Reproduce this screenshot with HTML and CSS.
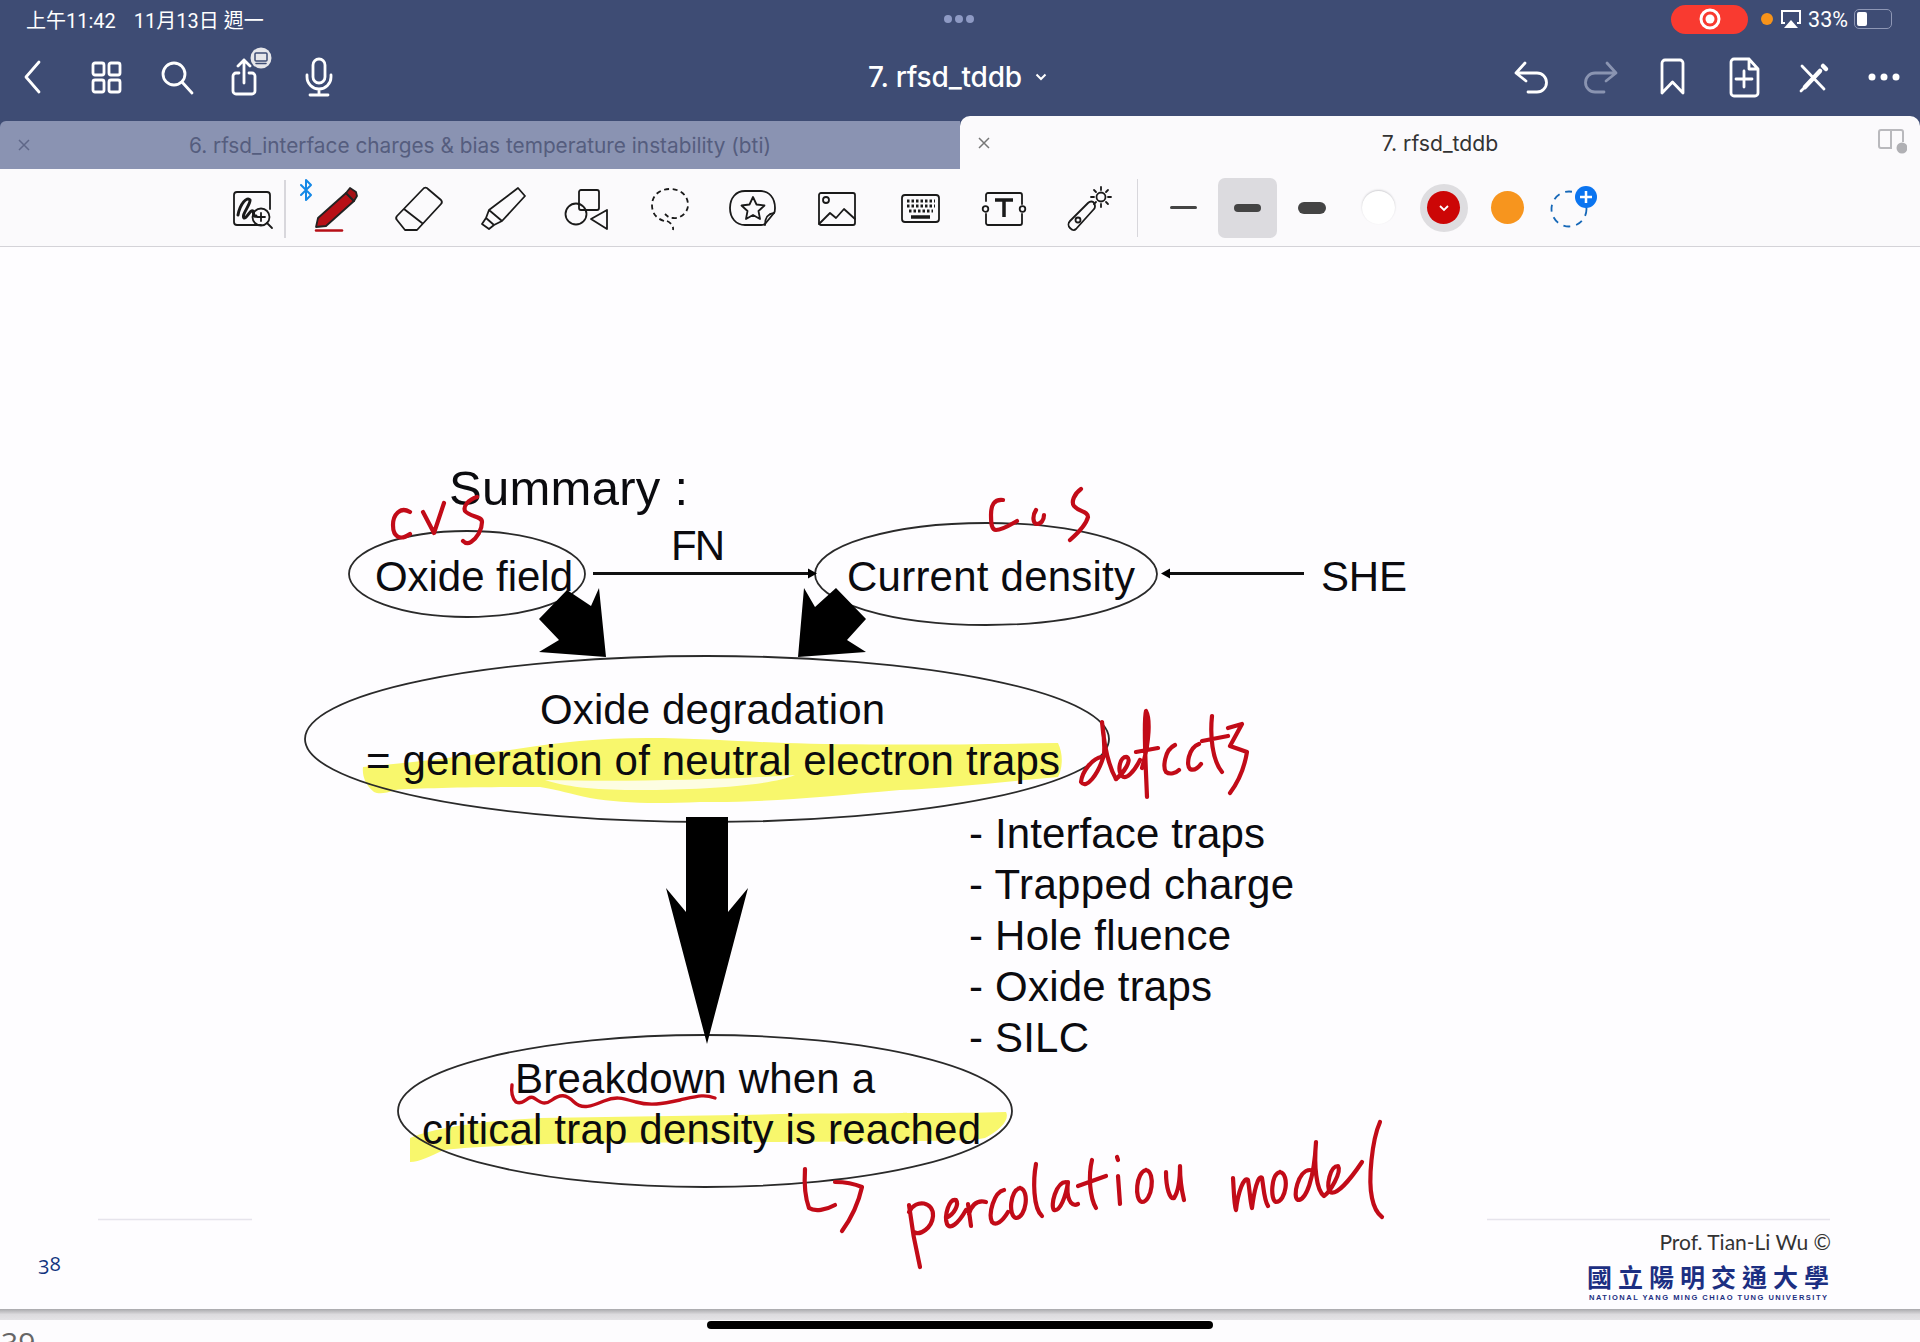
FILE: index.html
```html
<!DOCTYPE html>
<html lang="zh-Hant">
<head>
<meta charset="utf-8">
<title>7. rfsd_tddb</title>
<link rel="stylesheet" href="styles.css">
</head>
<body>
<div class="app">
  <div class="status">
    <div class="status-time"><span>上午11:42</span><span>11月13日 週一</span></div>
    <div class="status-dots"><i></i><i></i><i></i></div>
    <div class="status-right">
      <div class="rec"><svg width="24" height="24" viewBox="0 0 24 24"><circle cx="12" cy="12" r="9" class="rec-ring"/><circle cx="12" cy="12" r="4.5" class="rec-core"/></svg></div>
      <i class="mic-dot"></i>
      <svg class="airplay" width="24" height="20" viewBox="0 0 24 20"><path d="M6 14H3V2h18v12h-3" class="st-w"/><path d="M12 11l7 8H5z" class="fill-w"/></svg>
      <span class="pct">33%</span>
      <div class="battery"><div class="battery-fill"></div></div>
    </div>
  </div>

  <div class="nav">
    <div class="nav-group">
      <div class="nav-slot"><svg class="ico" viewBox="0 0 40 40"><path d="M24 5L11 20l13 15"/></svg></div>
      <div class="nav-slot"><svg class="ico" viewBox="0 0 40 40"><rect x="7" y="6" width="11" height="12" rx="2"/><rect x="23" y="6" width="11" height="12" rx="2"/><rect x="7" y="23" width="11" height="12" rx="2"/><rect x="23" y="23" width="11" height="12" rx="2"/></svg></div>
      <div class="nav-slot"><svg class="ico" viewBox="0 0 40 40"><circle cx="17" cy="17" r="11"/><path d="M25 25l10 11"/></svg></div>
      <div class="nav-slot"><svg class="ico share" viewBox="0 0 40 40"><path d="M12 16H9a3 3 0 0 0-3 3v15a3 3 0 0 0 3 3h16a3 3 0 0 0 3-3V19a3 3 0 0 0-3-3h-3M17 26V3M11 9l6-6 6 6"/><circle cx="34" cy="1" r="10.5" class="badge"/><rect x="28" y="-4" width="12" height="8" rx="1" class="badge-in"/><path d="M29 6.500h10" class="badge-in"/></svg></div>
      <div class="nav-slot"><svg class="ico" viewBox="0 0 40 40"><rect x="14" y="2" width="12" height="24" rx="6"/><path d="M8 18v2a12 12 0 0 0 24 0v-2M20 32v5M11 38h18"/></svg></div>
    </div>
    <div class="doc-title">7. rfsd_tddb<svg class="chev" width="12" height="8" viewBox="0 0 12 8"><path d="M1.500 1.500L6 6l4.500-4.500"/></svg></div>
    <div class="nav-group nav-end">
      <div class="nav-slot"><svg class="ico" viewBox="0 0 40 40"><path d="M14 6L5 16l10 8M5 16h21a8.500 8.500 0 0 1 0 19h-9"/></svg></div>
      <div class="nav-slot"><svg class="ico dim" viewBox="0 0 40 40"><path d="M26 6l9 10-10 8M35 16H14a8.500 8.500 0 0 0 0 19h9"/></svg></div>
      <div class="nav-slot"><svg class="ico" viewBox="0 0 40 40"><path d="M10 36V6a3 3 0 0 1 3-3h15a3 3 0 0 1 3 3v30L20.500 25z"/></svg></div>
      <div class="nav-slot"><svg class="ico" viewBox="0 0 40 40"><path d="M8 5a3 3 0 0 1 3-3h15l9 10v24a3 3 0 0 1-3 3H11a3 3 0 0 1-3-3zM26 2v10h9M21 14v16M13 22h16"/></svg></div>
      <div class="nav-slot"><svg class="ico" viewBox="0 0 40 40"><path d="M9 9l22 23"/><path d="M30 9l3 3" class="thick"/><path d="M27 14L12 30" class="thick"/><path d="M11 31l-3 3"/></svg></div>
      <div class="nav-slot"><svg class="ico solid" viewBox="0 0 40 40"><circle cx="8" cy="20" r="3.500"/><circle cx="20" cy="20" r="3.500"/><circle cx="32" cy="20" r="3.500"/></svg></div>
    </div>
  </div>

  <div class="tabs">
    <div class="tab tab-off">
      <svg class="tab-x" width="14" height="14" viewBox="0 0 14 14"><path d="M2 2l10 10M12 2L2 12"/></svg>
      <span>6. rfsd_interface charges &amp; bias temperature instability (bti)</span>
    </div>
    <div class="tab tab-on">
      <svg class="tab-x" width="14" height="14" viewBox="0 0 14 14"><path d="M2 2l10 10M12 2L2 12"/></svg>
      <span>7. rfsd_tddb</span>
      <svg class="split" width="30" height="26" viewBox="0 0 30 26"><path d="M7 20H4a2 2 0 0 1-2-2V4a2 2 0 0 1 2-2h20a2 2 0 0 1 2 2v10M14 2v18H7"/><circle cx="25" cy="20" r="5.500" class="split-dot"/></svg>
    </div>
  </div>

  <div class="toolbar">
    <div class="tool tool-first">
      <svg class="t-ico" viewBox="0 0 48 48"><path d="M33 40H9a3 3 0 0 1-3-3V10a3 3 0 0 1 3-3h30a3 3 0 0 1 3 3v14"/><path d="M10 30c2-11 9-19 12-15 1 4-9 15-6 18 3 1 6-9 9-7 1 2 0 6 3 5" class="bold"/><circle cx="33" cy="32" r="8.500"/><path d="M39 38l5 5M33 28v8M29 32h8"/></svg>
      <i class="tool-rule"></i>
    </div>
    <div class="tool">
      <svg class="t-ico" viewBox="0 0 48 48"><path d="M-10 0L0 10-5 15V-5L0 0-10 10" class="bt"/><path d="M5 42L7 33 35 8l8 8-28 25z" class="pen-body"/><path d="M35 8l4-5 6 4 1 4-3 5z" class="pen-cap"/><path d="M5 45.500h26" class="pen-line"/></svg>
    </div>
    <div class="tool">
      <svg class="t-ico" viewBox="0 0 48 48"><path d="M28 4a3 3 0 0 1 5 0l13 11a3 3 0 0 1 0 4L22 45H10L2 35a3 3 0 0 1 0-4zM9 24l18 14"/></svg>
    </div>
    <div class="tool">
      <svg class="t-ico" viewBox="0 0 48 48"><path d="M39 3l7 8-23 25-13-11zM10 25l-3 8 8 7 8-4M7 33l-4 6 7 5 5-4"/></svg>
    </div>
    <div class="tool">
      <svg class="t-ico" viewBox="0 0 48 48"><rect x="17" y="5" width="20" height="20" rx="2"/><circle cx="14" cy="29" r="10.500"/><path d="M45 25L29 34l16 10z"/></svg>
    </div>
    <div class="tool">
      <svg class="t-ico dash" viewBox="0 0 48 48"><path d="M18 36C9 33 6 27 6 20 6 10 14 4 24 4s18 6 18 16c0 8-8 14-15 13-4 0-6-2-8-4M21 36c3 1 7 5 6 9"/></svg>
    </div>
    <div class="tool">
      <svg class="t-ico" viewBox="0 0 48 48"><path d="M16 6h16c8 0 14 7 14 17 0 2 0 4-1 5l-9 11c-1 1-3 1-4 1H16C7 40 1 33 1 23S7 6 16 6z"/><path d="M24 12l3.500 7.500 8 1-6 5.500 1.500 8-7-4-7 4 1.500-8-6-5.500 8-1zM36 40c0-7 2-11 9-12"/></svg>
    </div>
    <div class="tool">
      <svg class="t-ico" viewBox="0 0 48 48"><rect x="6" y="8" width="36" height="32" rx="2"/><circle cx="13" cy="15" r="3"/><path d="M6 39l11-11 6 5 8-9 11 10"/></svg>
    </div>
    <div class="tool">
      <svg class="t-ico" viewBox="0 0 48 48"><rect x="5" y="10" width="37" height="27" rx="3"/><path d="M10 16h28M10 21h28M12 26h24" class="keys"/><path d="M14 32h19" class="thick"/></svg>
    </div>
    <div class="tool">
      <svg class="t-ico" viewBox="0 0 48 48"><path d="M6 16V10a2 2 0 0 1 2-2h32a2 2 0 0 1 2 2v9M42 29v9a2 2 0 0 1-2 2H8a2 2 0 0 1-2-2v-9"/><circle cx="5.500" cy="24" r="2.800"/><circle cx="42.500" cy="24" r="2.800"/><path d="M15 15h18M24 15v17" class="thick"/></svg>
    </div>
    <div class="tool">
      <svg class="t-ico" viewBox="0 0 48 48"><path d="M6 36L24 18c2-2 5-2 6 0s2 4 0 6L12 44c-2 2-4 1-6-1s-2-5 0-7z"/><circle cx="14" cy="35" r="2.500"/><circle cx="37" cy="12" r="4.500"/><path d="M37 2v3M37 19v3M47 12h-3M30 12h-3M44 5l-2 2M32 17l-2 2M44 19l-2-2M32 7l-2-2"/></svg>
    </div>
    <i class="tool-sep"></i>
    <div class="swatch"><i class="line line-s"></i></div>
    <div class="swatch swatch-on"><i class="line line-m"></i></div>
    <div class="swatch"><i class="line line-l"></i></div>
    <div class="swatch"><i class="dot dot-white"></i></div>
    <div class="swatch"><i class="halo"><i class="dot dot-red"><svg width="12" height="8" viewBox="0 0 12 8"><path d="M2 2l4 4 4-4"/></svg></i></i></div>
    <div class="swatch"><i class="dot dot-orange"></i></div>
    <div class="swatch">
      <svg class="add-color" width="52" height="52" viewBox="0 0 52 52"><circle cx="20" cy="28" r="17.500"/><circle cx="37" cy="16" r="11" class="add-bg"/><path d="M37 10v12M31 16h12" class="add-plus"/></svg>
    </div>
  </div>

  <div class="slide">
    <svg class="slide-art" width="1920" height="1062" viewBox="0 247 1920 1062">
      <g class="hl">
        <path d="M363 767C420 762 470 755 510 750C560 742 600 738 647 738C700 738 750 742 785 743C850 745 950 745 1058 743C1064 755 1062 770 1058 777C1000 782 950 788 900 790C820 797 760 803 700 802C650 804 620 803 590 798C570 794 560 790 540 787C480 787 420 788 395 790C385 794 378 794 374 792C365 785 362 775 363 767Z"/>
        <path d="M545 780C620 782 720 780 795 775C770 786 700 790 640 790C600 790 570 788 545 780Z" class="hl-gap"/>
        <path d="M410 1138C440 1125 504 1120 540 1118L738 1115C850 1112 950 1114 1006 1112C1010 1120 1000 1130 985 1138L973 1140C900 1142 700 1142 571 1143C520 1145 470 1147 444 1150C430 1156 420 1162 410 1162Z"/>
      </g>
      <g class="shape">
        <ellipse cx="467" cy="574" rx="118" ry="43"/>
        <ellipse cx="986" cy="574" rx="171" ry="51"/>
        <ellipse cx="707" cy="739" rx="402" ry="83"/>
        <ellipse cx="705" cy="1111" rx="307" ry="76"/>
        <path d="M593 573.500H810M1304 573.500H1168" class="arrow-line"/>
      </g>
      <g class="arrow">
        <path d="M817 573.500l-9-5v10zM1161 573.500l9-5v10z"/>
        <path d="M606 657L599 588 591 606 567 590 539 619 559 640 539 652z"/>
        <path d="M798 657L804 588 815 607 836 588 866 619 847 640 866 652z"/>
        <path d="M686 817H728V912L748 888 707 1044 666 888 686 912z"/>
      </g>
      <g class="label">
        <text x="449" y="505" class="big" textLength="239">Summary :</text>
        <text x="375" y="591" textLength="198">Oxide field</text>
        <text x="671" y="560" textLength="54">FN</text>
        <text x="847" y="591" textLength="288">Current density</text>
        <text x="1321" y="591" textLength="86">SHE</text>
        <text x="540" y="724" textLength="345">Oxide degradation</text>
        <text x="366" y="775" textLength="694">= generation of neutral electron traps</text>
        <text x="969" y="848" textLength="296">- Interface traps</text>
        <text x="969" y="899" textLength="325">- Trapped charge</text>
        <text x="969" y="950" textLength="262">- Hole fluence</text>
        <text x="969" y="1001" textLength="243">- Oxide traps</text>
        <text x="969" y="1052" textLength="120">- SILC</text>
        <text x="515" y="1093" textLength="360">Breakdown when a</text>
        <text x="422" y="1144" textLength="559">critical trap density is reached</text>
      </g>
      <g class="ink">
        <path d="M410 512C400 506 393 515 393 525C393 537 400 541 410 534M423 512L434 533L444 503M477 497C468 500 463 506 465 511C470 517 482 516 482 522C482 530 477 538 471 542C468 544 465 543 463 541"/>
        <path d="M1003 500C994 499 991 505 991 515C991 525 992 530 996 530C1002 530 1010 525 1017 521M1036 510C1032 516 1033 524 1037 524C1041 524 1044 520 1044 515M1081 489C1074 494 1071 502 1074 506C1079 512 1088 511 1088 517C1086 525 1078 533 1070 540"/>
        <path d="M1102 757C1092 758 1082 772 1081 782C1086 790 1098 775 1104 755C1105 742 1103 728 1102 722C1104 745 1108 765 1116 779"/>
        <path d="M1116 779C1124 773 1132 760 1127 757C1120 756 1117 770 1122 776C1126 780 1134 772 1140 760"/>
        <path d="M1142 768C1150 740 1150 718 1146 711C1143 722 1146 770 1147 797M1136 752L1158 748"/>
        <path d="M1175 745C1164 750 1163 768 1166 772C1170 775 1176 773 1179 770M1199 744C1188 748 1186 766 1190 769C1194 771 1198 768 1201 764"/>
        <path d="M1212 716C1210 735 1212 760 1222 772M1202 741L1228 736M1228 728L1242 724L1230 746L1247 752C1244 770 1236 785 1230 793"/>
        <path d="M512 1085C511 1092 512 1098 516 1102C524 1106 528 1094 534 1098S544 1106 552 1100S566 1094 574 1102S592 1106 604 1101S622 1098 636 1102S662 1104 680 1100S704 1094 715 1098" class="fine"/>
        <path d="M805 1169C804 1185 806 1200 809 1208C815 1212 826 1210 835 1205M835 1182C845 1182 855 1184 862 1187C858 1205 850 1220 842 1231"/>
        <path d="M909 1205C912 1230 916 1250 920 1267M909 1212C916 1198 934 1202 933 1216C932 1228 920 1236 914 1232"/>
        <path d="M946 1218C955 1214 959 1204 956 1200C949 1198 944 1216 947 1224C950 1230 958 1224 966 1210M968 1204L971 1226M969 1214C972 1204 978 1200 986 1202"/>
        <path d="M1004 1190C994 1192 988 1214 992 1222C996 1226 1002 1222 1008 1212M1020 1188C1010 1190 1008 1216 1016 1218C1026 1218 1030 1190 1020 1188"/>
        <path d="M1036 1164C1033 1180 1033 1208 1042 1216M1066 1182C1056 1182 1050 1206 1054 1210C1060 1212 1066 1196 1068 1182C1066 1196 1070 1208 1078 1204"/>
        <path d="M1092 1160C1088 1176 1090 1198 1096 1208M1078 1186L1106 1176M1118 1176L1120 1204M1117 1157L1118 1160"/>
        <path d="M1146 1170C1136 1172 1134 1200 1142 1202C1152 1202 1156 1172 1146 1170M1166 1172C1166 1188 1170 1200 1174 1198C1178 1192 1180 1184 1180 1166C1180 1184 1182 1192 1184 1200"/>
        <path d="M1233 1178C1234 1192 1234 1205 1236 1210C1238 1192 1244 1176 1248 1180C1250 1192 1250 1200 1252 1208C1254 1192 1258 1174 1262 1178C1264 1190 1264 1200 1268 1206M1280 1172C1271 1174 1270 1200 1276 1202C1286 1202 1290 1174 1280 1172"/>
        <path d="M1310 1170C1298 1170 1292 1198 1298 1200C1306 1200 1314 1180 1316 1142C1314 1165 1316 1190 1324 1196C1330 1192 1342 1172 1338 1166C1330 1166 1326 1186 1330 1192C1336 1196 1350 1180 1362 1162M1380 1122C1372 1140 1368 1180 1372 1198C1374 1208 1378 1214 1382 1217"/>
      </g>
      <path d="M98 1219.500H252M1487 1219.500H1830" class="foot-rule"/>
      <text x="38" y="1271" class="page-no"><tspan dy="3">3</tspan><tspan dy="-3">8</tspan></text>
      <text x="1831" y="1250" class="prof">Prof. Tian-Li Wu ©</text>
      <text x="1587" y="1287" class="uni" textLength="242">國立陽明交通大學</text>
      <text x="1589" y="1300" class="uni-en" textLength="238">NATIONAL YANG MING CHIAO TUNG UNIVERSITY</text>
    </svg>
  </div>
  <div class="slide-shadow"></div>
  <div class="next-page"><span>39</span><i class="home"></i></div>
</div>
</body>
</html>
```
FILE: styles.css
```css
* { box-sizing: border-box; }
html, body { margin: 0; padding: 0; background: #fdfcfe; }
i { display: block; }
.app { width: 1920px; height: 1342px; display: flex; flex-direction: column; overflow: hidden; position: relative; font-family: Inter, "Noto Sans CJK TC", sans-serif; }

.status { height: 40px; background: #3e4c74; color: #fff; display: grid; grid-template-columns: 1fr auto 1fr; align-items: center; font-size: 19px; padding: 0 28px 2px 26px; }
.status-time { display: flex; gap: 18px; font-family: Roboto, "Noto Sans CJK TC", sans-serif; font-size: 20px; }
.status-dots { display: flex; gap: 3px; }
.status-dots i { width: 8px; height: 8px; border-radius: 50%; background: #8e9ac4; }
.status-right { display: flex; align-items: center; justify-content: flex-end; }
.rec { width: 77px; height: 29px; border-radius: 15px; background: #f93a30; display: flex; align-items: center; justify-content: center; margin-right: 2px; }
.rec-ring { fill: #f93a30; stroke: #fff; stroke-width: 3; }
.rec-core { fill: #fff; }
.mic-dot { width: 12px; height: 12px; border-radius: 50%; background: #f7931a; margin-left: 11px; }
.airplay { margin-left: 6px; margin-right: -2px; }
.st-w { fill: none; stroke: #fff; stroke-width: 2; }
.fill-w { fill: #fff; }
.pct { margin-left: 7px; font-size: 21.500px; font-family: Roboto, sans-serif; }
.battery { width: 38px; height: 20px; margin-left: 6px; border: 1.500px solid #8e97b5; border-radius: 5px; padding: 2px; }
.battery-fill { width: 10px; height: 100%; background: #fff; border-radius: 2px; }

.nav { height: 76px; background: #3e4c74; display: grid; grid-template-columns: 1fr auto 1fr; align-items: center; padding-bottom: 2px; }
.nav-group { display: flex; margin-left: -1px; }
.nav-end { justify-content: flex-end; margin: 0 1px 0 0; }
.nav-slot { width: 71px; display: flex; justify-content: center; }
.nav-end .nav-slot { width: 70.600px; }
.ico { width: 40px; height: 40px; overflow: visible; fill: none; stroke: #fff; stroke-width: 2.800; stroke-linecap: round; stroke-linejoin: round; }
.ico.dim { stroke: #8a94b1; }
.ico.solid { fill: #fff; stroke: none; }
.ico .thick { stroke-width: 4.500; }
.ico .badge { fill: #e6e6ea; stroke: none; }
.ico .badge-in { stroke: #3e4c74; stroke-width: 1.500; }
.share { transform: translateX(-1px); }
.doc-title { color: #fff; font-size: 28px; font-weight: 500; display: flex; align-items: center; gap: 13px; letter-spacing: -0.200px; margin-right: 5px; }
.chev { fill: none; stroke: #fff; stroke-width: 2; }

.tabs { height: 53px; display: flex; align-items: flex-end; background: #3e4c74; }
.tab { width: 960px; position: relative; display: flex; align-items: center; justify-content: center; }
.tab-off { height: 48px; background: #8a93b2; color: #555d7e; border-radius: 6px 0 0 0; font-size: 20.800px; }
.tab-on { height: 53px; background: #fbfafc; color: #333; border-radius: 10px 10px 0 0; font-size: 21.200px; }
.tab-x { position: absolute; left: 17px; top: 50%; margin-top: -7px; fill: none; stroke: #5f6788; stroke-width: 1.500; }
.tab-on .tab-x { stroke: #777; }
.split { position: absolute; right: 13px; top: 12px; fill: none; stroke: #b9b9bd; stroke-width: 2; }
.split-dot { fill: #b0b0b4; stroke: none; }

.toolbar { height: 78px; background: #fbfafc; border-bottom: 1.500px solid #d4d3d8; display: flex; align-items: center; padding: 0 0 0 210px; }
.tool { width: 83.600px; height: 60px; display: flex; align-items: center; justify-content: center; position: relative; }
.tool-rule { position: absolute; right: 8px; top: 2px; width: 1.500px; height: 58px; background: #d8d7dc; }
.t-ico { width: 48px; height: 48px; overflow: visible; fill: none; stroke: #1a1a1a; stroke-width: 1.800; stroke-linecap: round; stroke-linejoin: round; margin-top: 2px; }
.t-ico.dash { stroke-dasharray: 5 3.500; stroke-linecap: butt; }
.t-ico .bold { stroke-width: 3; }
.t-ico .thick { stroke-width: 3.500; stroke-linecap: butt; }
.t-ico .keys { stroke-width: 3; stroke-dasharray: 2.500 2; stroke-linecap: butt; }
.t-ico .bt { stroke: #1488e6; stroke-width: 2; }
.pen-body { fill: #b70f16; stroke: #222; }
.pen-cap { fill: #a41015; stroke: #222; }
.pen-line { stroke: #b70f16; stroke-width: 2.500; }
.tool-sep { width: 1.500px; height: 58px; background: #d8d7dc; margin: 0 13px 0 7px; }
.swatch { width: 65px; height: 60px; display: flex; align-items: center; justify-content: center; }
.swatch-on { width: 59px; margin: 0 4px 0 2px; background: #dcdbdf; border-radius: 7px; }
.line { background: #444; border-radius: 6px; }
.line-s { width: 27px; height: 3px; }
.line-m { width: 27px; height: 8px; }
.line-l { width: 28px; height: 12px; margin-left: -4px; }
.dot { width: 33px; height: 33px; border-radius: 50%; display: flex; align-items: center; justify-content: center; }
.dot-white { background: #fff; box-shadow: 0 -1px 2px #cfcfd2; }
.dot-red { background: #cc0606; }
.dot-red svg { fill: none; stroke: #fff; stroke-width: 1.800; }
.dot-orange { background: #f7951e; margin-left: -2px; }
.halo { width: 48px; height: 48px; border-radius: 50%; background: #dedde0; display: flex; align-items: center; justify-content: center; }
.add-color { fill: none; stroke: #1668b8; stroke-width: 1.800; stroke-dasharray: 7 6; overflow: visible; transform: translate(1px, -1px); }
.add-bg { fill: #0a74f0; stroke: none; }
.add-plus { stroke: #fff; stroke-width: 2.500; stroke-dasharray: none; }

.slide { height: 1062px; background: #fefdff; }
.slide-art { display: block; }
.hl path { fill: #f8f76c; stroke: none; }
.hl .hl-gap { fill: #fdfde2; }
.shape { fill: none; stroke: #2a2a2a; stroke-width: 1.800; }
.arrow-line { stroke-width: 3px; stroke: #111; }
.arrow { fill: #000; }
.label text { font-family: "Liberation Sans", Arial, sans-serif; font-size: 42px; fill: #0b0b0f; }
.label .big { font-size: 49px; }
.ink path { fill: none; stroke: #c20b18; stroke-width: 4.200; stroke-linecap: round; stroke-linejoin: round; }
.ink .fine { stroke-width: 3.400px; }
.foot-rule { stroke: #e6e4ec; stroke-width: 1.500; fill: none; }
.page-no { font-family: "Open Sans", sans-serif; font-size: 20px; fill: #12347e; }
.prof { font-family: Lato, sans-serif; font-size: 21px; fill: #333; text-anchor: end; }
.uni { font-family: "Noto Sans CJK TC", sans-serif; font-size: 25px; font-weight: 700; fill: #1c2f82; }
.uni-en { font-family: "Liberation Sans", sans-serif; font-size: 7.500px; font-weight: 700; fill: #1c2f82; }

.slide-shadow { height: 11px; background: linear-gradient(#a9a9ac, #dcdbde 50%, #e4e3e6); }
.next-page { flex: 1; background: #fdfcfe; position: relative; overflow: hidden; }
.next-page span { position: absolute; left: 1px; top: 8px; font: 30px/30px "Open Sans", sans-serif; color: #666; }
.home { position: absolute; left: 707px; top: 1px; width: 506px; height: 8px; border-radius: 4px; background: #000; }
```
